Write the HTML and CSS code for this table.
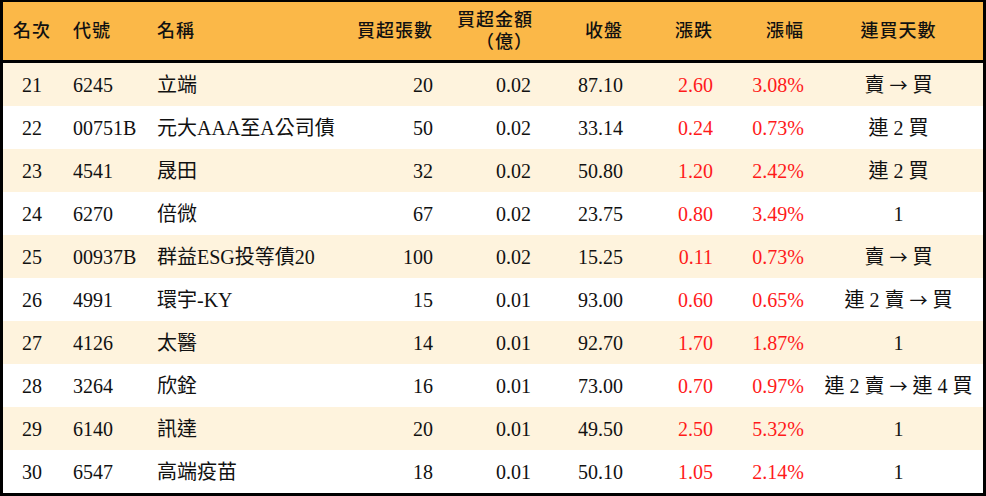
FILE: index.html
```html
<!DOCTYPE html>
<html lang="zh-Hant">
<head>
<meta charset="utf-8">
<title>買超排行</title>
<link rel="stylesheet" href="styles.css">
</head>
<body>
<div class="board">
  <table class="rank">
    <colgroup>
      <col class="c-rank"><col class="c-code"><col class="c-name"><col class="c-vol">
      <col class="c-amt"><col class="c-close"><col class="c-chg"><col class="c-pct"><col class="c-days">
    </colgroup>
    <thead>
      <tr>
        <th class="ctr">名次</th>
        <th class="lft">代號</th>
        <th class="lft">名稱</th>
        <th class="rgt">買超張數</th>
        <th class="rgt">買超金額<br>（億）</th>
        <th class="rgt">收盤</th>
        <th class="rgt">漲跌</th>
        <th class="rgt">漲幅</th>
        <th class="ctr">連買天數</th>
      </tr>
    </thead>
    <tbody>
      <tr><td class="ctr">21</td><td class="lft">6245</td><td class="lft">立端</td><td class="rgt">20</td><td class="rgt">0.02</td><td class="rgt">87.10</td><td class="rgt up">2.60</td><td class="rgt up">3.08%</td><td class="ctr">賣 <span class="arr">→</span> 買</td></tr>
      <tr><td class="ctr">22</td><td class="lft">00751B</td><td class="lft">元大AAA至A公司債</td><td class="rgt">50</td><td class="rgt">0.02</td><td class="rgt">33.14</td><td class="rgt up">0.24</td><td class="rgt up">0.73%</td><td class="ctr">連 2 買</td></tr>
      <tr><td class="ctr">23</td><td class="lft">4541</td><td class="lft">晟田</td><td class="rgt">32</td><td class="rgt">0.02</td><td class="rgt">50.80</td><td class="rgt up">1.20</td><td class="rgt up">2.42%</td><td class="ctr">連 2 買</td></tr>
      <tr><td class="ctr">24</td><td class="lft">6270</td><td class="lft">倍微</td><td class="rgt">67</td><td class="rgt">0.02</td><td class="rgt">23.75</td><td class="rgt up">0.80</td><td class="rgt up">3.49%</td><td class="ctr">1</td></tr>
      <tr><td class="ctr">25</td><td class="lft">00937B</td><td class="lft">群益ESG投等債20</td><td class="rgt">100</td><td class="rgt">0.02</td><td class="rgt">15.25</td><td class="rgt up">0.11</td><td class="rgt up">0.73%</td><td class="ctr">賣 <span class="arr">→</span> 買</td></tr>
      <tr><td class="ctr">26</td><td class="lft">4991</td><td class="lft">環宇-KY</td><td class="rgt">15</td><td class="rgt">0.01</td><td class="rgt">93.00</td><td class="rgt up">0.60</td><td class="rgt up">0.65%</td><td class="ctr">連 2 賣 <span class="arr">→</span> 買</td></tr>
      <tr><td class="ctr">27</td><td class="lft">4126</td><td class="lft">太醫</td><td class="rgt">14</td><td class="rgt">0.01</td><td class="rgt">92.70</td><td class="rgt up">1.70</td><td class="rgt up">1.87%</td><td class="ctr">1</td></tr>
      <tr><td class="ctr">28</td><td class="lft">3264</td><td class="lft">欣銓</td><td class="rgt">16</td><td class="rgt">0.01</td><td class="rgt">73.00</td><td class="rgt up">0.70</td><td class="rgt up">0.97%</td><td class="ctr">連 2 賣 <span class="arr">→</span> 連 4 買</td></tr>
      <tr><td class="ctr">29</td><td class="lft">6140</td><td class="lft">訊達</td><td class="rgt">20</td><td class="rgt">0.01</td><td class="rgt">49.50</td><td class="rgt up">2.50</td><td class="rgt up">5.32%</td><td class="ctr">1</td></tr>
      <tr><td class="ctr">30</td><td class="lft">6547</td><td class="lft">高端疫苗</td><td class="rgt">18</td><td class="rgt">0.01</td><td class="rgt">50.10</td><td class="rgt up">1.05</td><td class="rgt up">2.14%</td><td class="ctr">1</td></tr>
    </tbody>
  </table>
</div>
</body>
</html>
```
FILE: styles.css
```css
html, body {
  margin: 0;
  padding: 0;
  background: #ffffff;
}

.board {
  box-sizing: border-box;
  width: 986px;
  height: 496px;
  border: 3px solid #000;
  border-top-width: 2px;
  overflow: hidden;
}

.rank {
  width: 980px;
  table-layout: fixed;
  border-collapse: separate;
  border-spacing: 0;
  font-family: "Liberation Serif", "Noto Sans CJK TC", serif;
  font-size: 20px;
  color: #111;
}

.c-rank { width: 58px; }
.c-code { width: 86px; }
.c-name { width: 186px; }
.c-vol { width: 110px; }
.c-amt { width: 98px; }
.c-close { width: 92px; }
.c-chg { width: 90px; }
.c-pct { width: 91px; }
.c-days { width: 169px; }

.rank thead tr {
  height: 61px;
  background: #fbb848;
}

.rank th {
  font-weight: 500;
  font-size: 18px;
  line-height: 22px;
  padding: 0 10px;
  border-bottom: 3px solid #000;
  letter-spacing: 1px;
  white-space: nowrap;
}

.rank tbody tr {
  height: 43px;
}

.rank tbody tr:nth-child(odd) {
  background: #fef3dd;
}

.rank td {
  padding: 0 10px;
  line-height: 24px;
  white-space: nowrap;
  word-spacing: 0;
}

.rank th.lft, .rank td.lft { text-align: left; }
.rank th.rgt, .rank td.rgt { text-align: right; }
.rank th.ctr, .rank td.ctr { text-align: center; }

.rank th:nth-child(2), .rank td:nth-child(2) { padding-left: 12px; }
.rank th:nth-child(5) { padding-right: 8px; }
.rank th:nth-child(9), .rank td:nth-child(9) { padding: 0; }
.rank th:nth-child(1), .rank td:nth-child(1) { padding: 0; }

.rank td.up { color: #ff1a1a; }

.arr {
  font-family: "Noto Sans CJK TC", sans-serif;
  font-size: 18px;
}
```
